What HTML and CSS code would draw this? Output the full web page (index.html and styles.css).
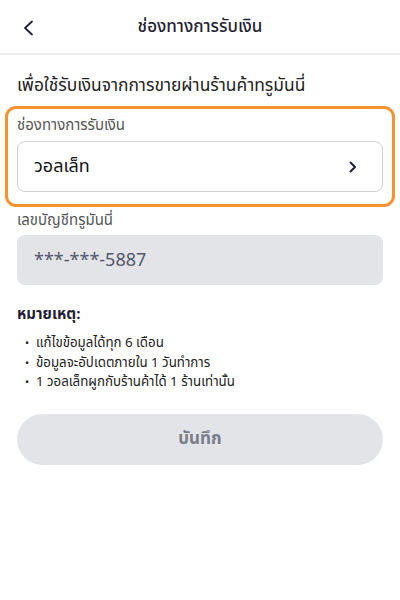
FILE: index.html
```html
<!DOCTYPE html>
<html lang="th">
<head>
    <meta charset="UTF-8">
    <meta name="viewport" content="width=device-width, initial-scale=1.0">
    <title>ช่องทางการรับเงิน</title>
    <link rel="stylesheet" href="styles.css">
</head>
<body>
    <div class="header">
        <button class="back" aria-label="back">
            <svg width="12" height="16" viewBox="0 0 12 16"><path d="M10 1.5 L3 8 L10 14.5" fill="none" stroke="#1f2033" stroke-width="1.8" stroke-linecap="round" stroke-linejoin="round"/></svg>
        </button>
        <div class="title">ช่องทางการรับเงิน</div>
    </div>

    <div class="content">
        <div class="intro">เพื่อใช้รับเงินจากการขายผ่านร้านค้าทรูมันนี่</div>

        <div class="highlight">
            <div class="label">ช่องทางการรับเงิน</div>
            <div class="select">
                <span>วอลเล็ท</span>
                <svg width="8" height="12" viewBox="0 0 8 12"><path d="M1.5 1.5 L6 6 L1.5 10.5" fill="none" stroke="#1f2033" stroke-width="2" stroke-linecap="round" stroke-linejoin="round"/></svg>
            </div>
        </div>

        <div class="label second">เลขบัญชีทรูมันนี่</div>
        <div class="field">***-***-5887</div>

        <div class="note-title">หมายเหตุ:</div>
        <ul class="notes">
            <li>แก้ไขข้อมูลได้ทุก 6 เดือน</li>
            <li>ข้อมูลจะอัปเดตภายใน 1 วันทำการ</li>
            <li>1 วอลเล็ทผูกกับร้านค้าได้ 1 ร้านเท่านั้น</li>
        </ul>

        <button class="save">บันทึก</button>
    </div>
</body>
</html>
```

FILE: styles.css
```css
body {
    margin: 0;
    background-color: #fff;
    font-family: "Noto Sans Thai", "Noto Sans", sans-serif;
    color: #1f2033;
}
.header {
    height: 53px;
    display: flex;
    align-items: center;
    justify-content: center;
    position: relative;
    border-bottom: 2px solid #eeeeee;
}
.back {
    position: absolute;
    left: 18px;
    top: 16px;
    background: none;
    border: none;
    padding: 4px;
    display: flex;
}
.title {
    font-size: 17px;
    font-weight: 500;
}
.content {
    padding: 0 17px;
}
.intro {
    margin-top: 18px;
    font-size: 17.4px;
    line-height: 26px;
    color: #222;
}
.highlight {
    margin: 7px -12px 0;
    padding: 6px 9px 12px;
    border: 3px solid #f7922f;
    border-radius: 11px;
}
.label {
    font-size: 15px;
    line-height: 22px;
    color: #555;
}
.label.second {
    margin-top: 3px;
}
.select {
    margin-top: 4px;
    height: 49px;
    border: 1px solid #cfcfd4;
    border-radius: 8px;
    display: flex;
    align-items: center;
    justify-content: space-between;
    padding: 0 25px 0 16px;
    font-size: 18px;
    color: #111;
}
.field {
    margin-top: 3px;
    height: 50px;
    border-radius: 8px;
    background-color: #e3e4e7;
    display: flex;
    align-items: center;
    padding: 0 17px;
    font-size: 18px;
    color: #55586a;
}
.note-title {
    margin-top: 19px;
    font-size: 15px;
    font-weight: 700;
    line-height: 22px;
}
.notes {
    list-style: none;
    margin: 8px 0 0;
    padding: 0;
    font-size: 13.3px;
    line-height: 18.5px;
    color: #222;
}
.notes li::before {
    content: "•";
    display: inline-block;
    width: 19px;
    padding-left: 8px;
    box-sizing: border-box;
    font-size: 11px;
}
.save {
    margin-top: 21px;
    width: 100%;
    height: 51px;
    border: none;
    border-radius: 26px;
    background-color: #e3e4e7;
    font-family: inherit;
    font-size: 17px;
    font-weight: 700;
    color: #7b7c8a;
}
```
